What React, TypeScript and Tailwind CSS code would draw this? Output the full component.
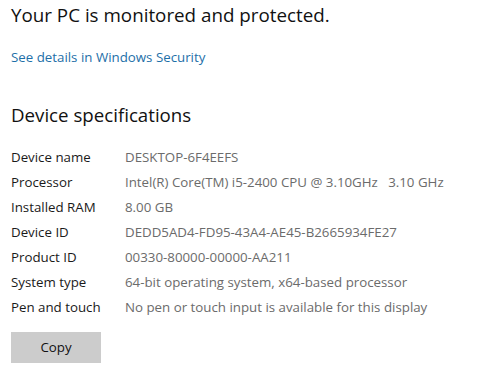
import React from "react";

const rows: [string, string][] = [
  ["Device name", "DESKTOP-6F4EEFS"],
  ["Processor", "Intel(R) Core(TM) i5-2400 CPU @ 3.10GHz\u00a0\u00a0\u00a03.10 GHz"],
  ["Installed RAM", "8.00 GB"],
  ["Device ID", "DEDD5AD4-FD95-43A4-AE45-B2665934FE27"],
  ["Product ID", "00330-80000-00000-AA211"],
  ["System type", "64-bit operating system, x64-based processor"],
  ["Pen and touch", "No pen or touch input is available for this display"],
];

export default function App() {
  return (
    <div
      className="w-[499px] h-[371px] bg-white overflow-hidden pl-[11px]"
      style={{ fontFamily: '"Open Sans", "Noto Sans", sans-serif' }}
    >
      <div className="text-[18.8px] leading-[28px] text-[#111] pt-[1px]">Your PC is monitored and protected.</div>
      <div className="mt-[19px] text-[13.3px] leading-[18px] text-[#1e6fa8]">See details in Windows Security</div>
      <div className="mt-[35px] text-[18.7px] leading-[28px] text-[#111]">Device specifications</div>
      <div className="mt-[16px] flex flex-col">
        {rows.map(([k, v]) => (
          <div key={k} className="flex h-[25px] items-center text-[13.3px]">
            <div className="w-[114px] text-[#1a1a1a]">{k}</div>
            <div className="text-[#6b6b6b] whitespace-nowrap">{v}</div>
          </div>
        ))}
      </div>
      <button className="mt-[12px] w-[90px] h-[31px] bg-[#cccccc] text-[13.3px] text-[#111]">Copy</button>
    </div>
  );
}
